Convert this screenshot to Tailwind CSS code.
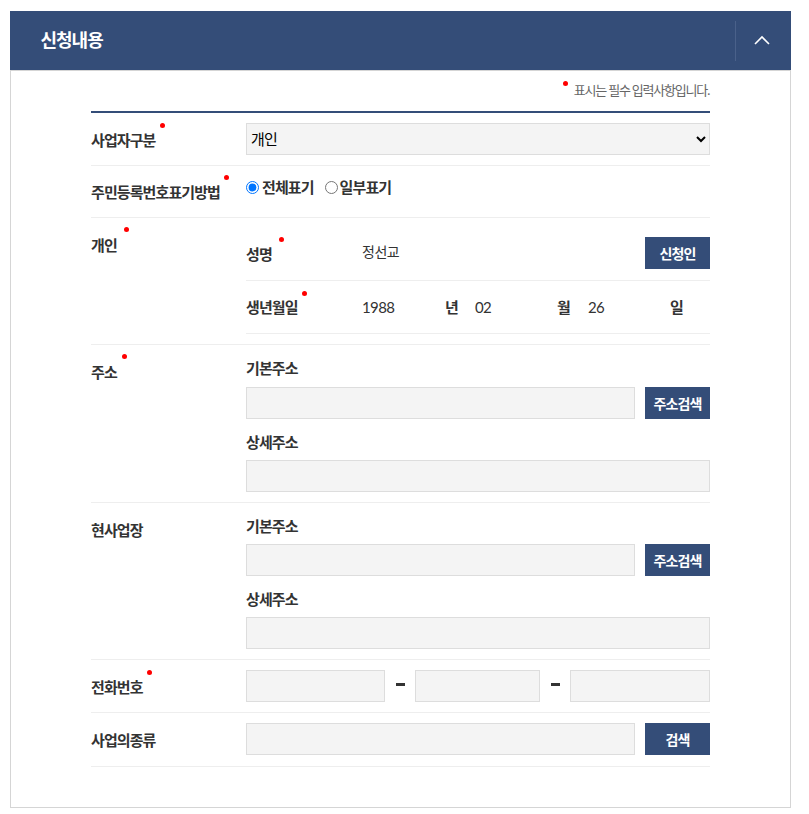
<!DOCTYPE html>
<html lang="ko">
<head>
  <meta charset="UTF-8">
  <meta name="viewport" content="width=device-width, initial-scale=1.0">
  <title>신청내용</title>
  <script src="https://cdn.jsdelivr.net/npm/@tailwindcss/browser@4"></script>
</head>
<body class="bg-white font-['Lato','Noto_Sans_CJK_KR',sans-serif] text-[15px] text-[#333] tracking-[-0.9px]">
  <div class="pt-[11px] pl-[10px] w-[791px]">
    <!-- header -->
    <div class="h-[59px] bg-[#344d78] flex items-center justify-between">
      <h2 class="pl-[30.5px] pb-[1px] text-[18px] font-bold text-white leading-none tracking-[-1px]">신청내용</h2>
      <div class="h-[40px] w-[56px] pr-[3px] pb-[1px] border-l border-[#4a618a] flex items-center justify-center">
        <svg class="w-[16px] h-[10px]" viewBox="0 0 16 10" fill="none" stroke="#fff" stroke-width="1.6"><path d="M1 9l7-7 7 7"/></svg>
      </div>
    </div>

    <div class="h-[738px] border border-t-1 border-[#d5d5d5] px-[80px]">
      <p class="h-[40px] pt-[9px] pr-[1px] text-right text-[13px] leading-[20px] text-[#666] tracking-[-1.2px]">
        <span class="relative pl-[11px]"><i class="absolute left-[0px] top-[-1px] w-[5px] h-[5px] rounded-full bg-[#f00]"></i>표시는 필수 입력사항입니다.</span>
      </p>

      <div class="border-t-2 border-[#344d78]">
        <!-- 사업자구분 -->
        <div class="flex items-center h-[53px] border-b border-[#eee]">
          <div class="w-[155px] pt-[2px] font-bold"><span class="relative">사업자구분<i class="absolute right-[-9px] top-[-8px] w-[5px] h-[5px] rounded-full bg-[#f00]"></i></span></div>
          <select class="flex-1 h-[32px] border border-[#ddd] bg-[#f4f4f4] text-[15px] tracking-[-0.9px] text-black"><option>개인</option></select>
        </div>

        <!-- 주민등록번호표기방법 -->
        <div class="flex items-center h-[52px] border-b border-[#eee]">
          <div class="w-[155px] pt-[2px] font-bold"><span class="relative">주민등록번호표기방법<i class="absolute right-[-9px] top-[-8px] w-[5px] h-[5px] rounded-full bg-[#f00]"></i></span></div>
          <div class="flex items-center font-bold pb-[8px]">
            <input type="radio" name="rrn" checked class="w-[13px] h-[13px] m-0 mr-[3px]">
            <span>전체표기</span>
            <input type="radio" name="rrn" class="w-[13px] h-[13px] m-0 ml-[11px] mr-[2px]">
            <span>일부표기</span>
          </div>
        </div>

        <!-- 개인 -->
        <div class="flex h-[127px] border-b border-[#eee]">
          <div class="w-[155px] pt-[16px] font-bold"><span class="relative">개인<i class="absolute right-[-12px] top-[-9px] w-[5px] h-[5px] rounded-full bg-[#f00]"></i></span></div>
          <div class="flex-1">
            <div class="flex items-center h-[63px] border-b border-[#eee]">
              <div class="w-[116px] pt-[11px] font-bold"><span class="relative">성명<i class="absolute right-[-12px] top-[-8px] w-[5px] h-[5px] rounded-full bg-[#f00]"></i></span></div>
              <div class="flex-1 pt-[5px] text-[14px] tracking-[-0.5px]">정선교</div>
              <button class="mt-[8px] w-[65px] h-[32px] bg-[#344d78] text-white text-[14px] font-bold">신청인</button>
            </div>
            <div class="flex items-center h-[53px] border-b border-[#eee]">
              <div class="w-[116px] font-bold"><span class="relative">생년월일<i class="absolute right-[-9px] top-[-7px] w-[5px] h-[5px] rounded-full bg-[#f00]"></i></span></div>
              <div class="w-[83px] pt-[1px] tracking-[-0.6px]">1988</div>
              <div class="w-[30px] font-bold">년</div>
              <div class="w-[82px] pt-[1px] tracking-[-0.6px]">02</div>
              <div class="w-[31px] font-bold">월</div>
              <div class="w-[82px] pt-[1px] tracking-[-0.6px]">26</div>
              <div class="font-bold">일</div>
            </div>
          </div>
        </div>

        <!-- 주소 -->
        <div class="flex h-[158px] border-b border-[#eee]">
          <div class="w-[155px] pt-[16px] font-bold"><span class="relative">주소<i class="absolute right-[-10px] top-[-9px] w-[5px] h-[5px] rounded-full bg-[#f00]"></i></span></div>
          <div class="flex-1 pt-[13px]">
            <div class="font-bold leading-[20px] mb-[9px]">기본주소</div>
            <div class="flex gap-[10px]">
              <input class="flex-1 min-w-0 h-[32px] border border-[#ddd] bg-[#f4f4f4]">
              <button class="w-[65px] h-[32px] bg-[#344d78] text-white text-[14px] font-bold">주소검색</button>
            </div>
            <div class="font-bold leading-[20px] mt-[13px] mb-[8px]">상세주소</div>
            <input class="block w-full h-[32px] border border-[#ddd] bg-[#f4f4f4]">
          </div>
        </div>

        <!-- 현사업장 -->
        <div class="flex h-[157px] border-b border-[#eee]">
          <div class="w-[155px] pt-[16px] font-bold">현사업장</div>
          <div class="flex-1 pt-[13px]">
            <div class="font-bold leading-[20px] mb-[8px]">기본주소</div>
            <div class="flex gap-[10px]">
              <input class="flex-1 min-w-0 h-[32px] border border-[#ddd] bg-[#f4f4f4]">
              <button class="w-[65px] h-[32px] bg-[#344d78] text-white text-[14px] font-bold">주소검색</button>
            </div>
            <div class="font-bold leading-[20px] mt-[13px] mb-[8px]">상세주소</div>
            <input class="block w-full h-[32px] border border-[#ddd] bg-[#f4f4f4]">
          </div>
        </div>

        <!-- 전화번호 -->
        <div class="flex items-center h-[53px] border-b border-[#eee]">
          <div class="w-[155px] pt-[2px] font-bold"><span class="relative">전화번호<i class="absolute right-[-9px] top-[-8px] w-[5px] h-[5px] rounded-full bg-[#f00]"></i></span></div>
          <div class="flex-1 flex items-center">
            <input class="w-[139px] h-[32px] border border-[#ddd] bg-[#f4f4f4]">
            <span class="w-[30px] flex justify-center"><i class="block w-[9px] h-[3px] mb-[4px] bg-[#333]"></i></span>
            <input class="w-[125px] h-[32px] border border-[#ddd] bg-[#f4f4f4]">
            <span class="w-[30px] flex justify-center"><i class="block w-[9px] h-[3px] mb-[4px] bg-[#333]"></i></span>
            <input class="w-[140px] h-[32px] border border-[#ddd] bg-[#f4f4f4]">
          </div>
        </div>

        <!-- 사업의종류 -->
        <div class="flex items-center h-[54px] pb-[1px] border-b border-[#eee]">
          <div class="w-[155px] pt-[2px] font-bold">사업의종류</div>
          <div class="flex-1 flex gap-[10px]">
            <input class="flex-1 min-w-0 h-[32px] border border-[#ddd] bg-[#f4f4f4]">
            <button class="w-[65px] h-[32px] bg-[#344d78] text-white text-[14px] font-bold">검색</button>
          </div>
        </div>
      </div>
    </div>
  </div>
</body>
</html>
